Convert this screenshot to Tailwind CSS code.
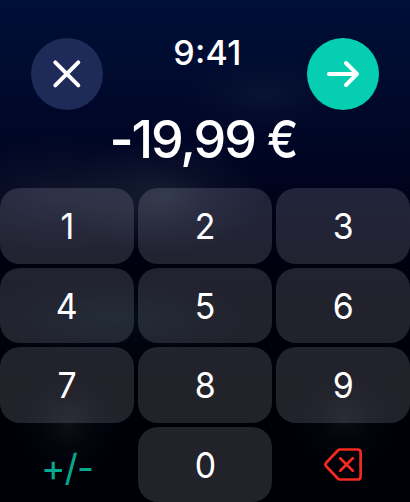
<!DOCTYPE html>
<html lang="de">
<head>
  <meta charset="UTF-8" />
  <meta name="viewport" content="width=device-width, initial-scale=1.0" />
  <title>Betrag eingeben</title>
  <script src="https://cdn.jsdelivr.net/npm/@tailwindcss/browser@4"></script>
</head>
<body class="bg-black text-white font-['Inter',sans-serif]">
  <main class="flex flex-col w-[410px] h-[502px] overflow-hidden bg-[radial-gradient(ellipse_80px_40px_at_265px_95px,#28344838,#28344818_50%,transparent),radial-gradient(ellipse_130px_60px_at_60px_196px,#39425348,#39425320_50%,transparent),radial-gradient(ellipse_100px_60px_at_165px_196px,#39425360,#39425328_50%,transparent),radial-gradient(ellipse_150px_45px_at_115px_318px,#08283850,#08283820_50%,transparent),radial-gradient(ellipse_50px_50px_at_68px_425px,#20282c60,#20282c20_50%,transparent),radial-gradient(ellipse_50px_50px_at_345px_420px,#20282c50,#20282c18_50%,transparent),linear-gradient(#000f38_0px,#000c30_60px,#000524_150px,#00031a_200px,#000111_250px,#00000a_310px,#000007_502px)]">
    <header class="flex justify-between pt-[38px] px-[31px]">
      <button class="flex items-center justify-center size-18 rounded-full bg-[#1e2b58]">
        <svg class="size-9" viewBox="0 0 36 36" fill="none" stroke="currentColor" stroke-width="4" stroke-linecap="round">
          <path d="M6.3 6.3L29.3 29.3M29.3 6.3L6.3 29.3" />
        </svg>
      </button>
      <h1 class="text-[34px] leading-[30px] font-medium tracking-[0.3px] pl-[5px]">9<span class="relative -top-0.5">:</span>41</h1>
      <button class="flex items-center justify-center size-18 rounded-full bg-[#06ceb0]">
        <svg class="size-9" viewBox="0 0 36 36" fill="none" stroke="currentColor" stroke-width="4" stroke-linecap="round" stroke-linejoin="round">
          <path d="M4 18H32M21 7L32 18L21 29" />
        </svg>
      </button>
    </header>

    <p class="h-[78px] pt-[4px] pr-[5px] text-center text-[52px] leading-[52px] font-medium tracking-[-2.1px] whitespace-nowrap"><span class="font-semibold">-</span>19,99 <span class="inline-block origin-left scale-x-90 -mr-1">€</span></p>

    <section class="grid grid-cols-3 grid-rows-4 gap-1 h-[314px] text-[36px]">
      <button class="rounded-[20px] bg-[#f4f0ff]/14"><span class="inline-block scale-x-94">1</span></button>
      <button class="rounded-[20px] bg-[#f4f0ff]/14"><span class="inline-block scale-x-94">2</span></button>
      <button class="rounded-[20px] bg-[#f4f0ff]/14"><span class="inline-block scale-x-94">3</span></button>
      <button class="rounded-[20px] bg-[#f4f0ff]/14 pt-0.5"><span class="inline-block scale-x-94">4</span></button>
      <button class="rounded-[20px] bg-[#f4f0ff]/14 pt-0.5"><span class="inline-block scale-x-94">5</span></button>
      <button class="rounded-[20px] bg-[#f4f0ff]/14 pt-0.5"><span class="inline-block scale-x-94">6</span></button>
      <button class="rounded-[20px] bg-[#f4f0ff]/14"><span class="inline-block scale-x-94">7</span></button>
      <button class="rounded-[20px] bg-[#f4f0ff]/14"><span class="inline-block scale-x-94">8</span></button>
      <button class="rounded-[20px] bg-[#f4f0ff]/14"><span class="inline-block scale-x-94">9</span></button>
      <button class="pt-1.5 leading-none text-[37px] tracking-[-0.9px] text-[#06a88f]">+/-</button>
      <button class="rounded-[20px] bg-[#f4f0ff]/14 pt-0.5"><span class="inline-block scale-x-94">0</span></button>
      <button class="flex items-center justify-center text-[#f5291f]">
        <svg class="w-[38px] h-[33px]" viewBox="0 0 38 33" fill="none" stroke="currentColor" stroke-width="2.7" stroke-linecap="round" stroke-linejoin="round">
          <path d="M16 1.5H33.5Q36.6 1.5 36.6 4.6V28.4Q36.6 31.5 33.5 31.5H16Q14.8 31.5 13.8 30.5L2 18Q.8 16.5 2 15L13.8 2.5Q14.8 1.5 16 1.5Z" />
          <path d="M16.2 10.2L28.8 22.8M28.8 10.2L16.2 22.8" />
        </svg>
      </button>
    </section>
  </main>
</body>
</html>
